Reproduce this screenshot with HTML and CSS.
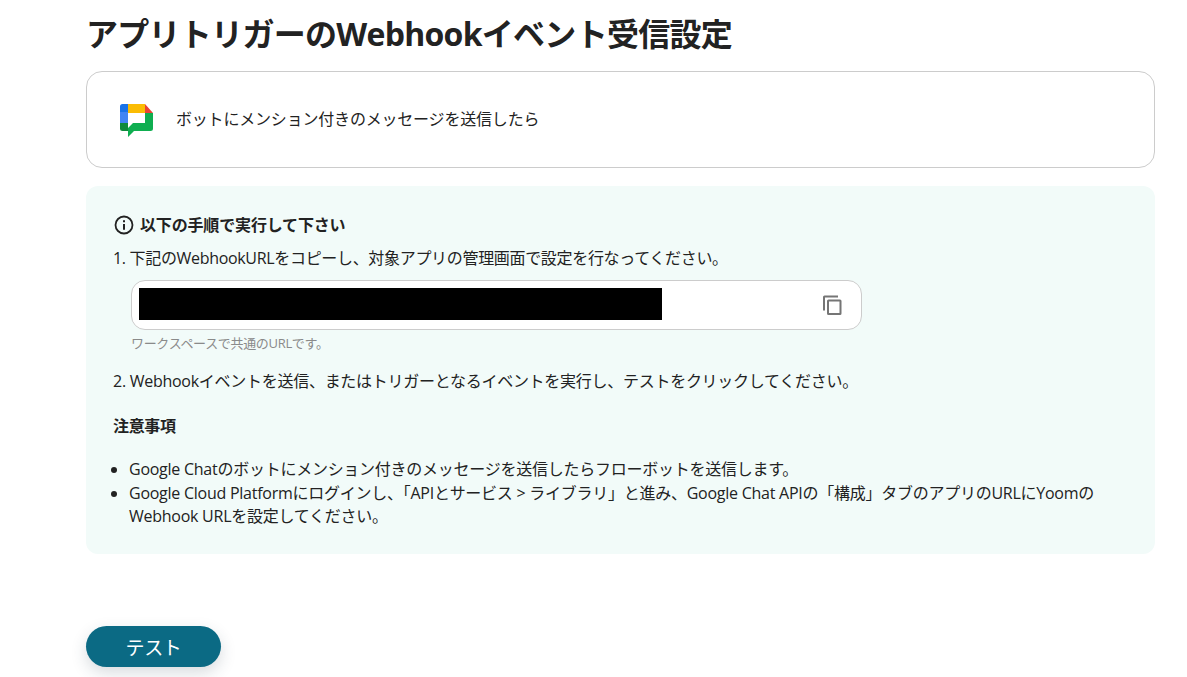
FILE: index.html
```html
<!DOCTYPE html>
<html lang="ja">
<head>
<meta charset="utf-8">
<title>アプリトリガーのWebhookイベント受信設定</title>
<link rel="stylesheet" href="styles.css">
</head>
<body>
<main class="page">
  <h1 class="title">アプリトリガーのWebhookイベント受信設定</h1>
  <section class="card">
    <svg class="chat-logo" viewBox="0 0 33 33" width="33" height="33" aria-hidden="true">
      <path d="M8 0H2.500A2.500 2.500 0 0 0 0 2.500V8h8z" fill="#1a73e8"/>
      <path d="M0 8h8v11H0z" fill="#4285f4"/>
      <path d="M0 19h8v8H2.500A2.500 2.500 0 0 1 0 24.500z" fill="#0f8a3c"/>
      <path d="M8 0h17v9H8z" fill="#fbbc04"/>
      <path d="M25 0l8 9h-8z" fill="#ea4335"/>
      <path d="M25 9h8v15.500a2.500 2.500 0 0 1-2.500 2.500H14l-6 6v-9l5-5h12z" fill="#0fae50"/>
    </svg>
    <p class="card-text">ボットにメンション付きのメッセージを送信したら</p>
  </section>
  <section class="panel">
    <h2 class="panel-heading">
      <svg class="info-icon" viewBox="0 0 20 20" width="20" height="20" aria-hidden="true">
        <circle cx="10" cy="10" r="8.500" fill="none" stroke="#222" stroke-width="1.800"/>
        <path d="M9 9h2v5.700H9zM9 5.300h2v2H9z" fill="#222"/>
      </svg>
      以下の手順で実行して下さい
    </h2>
    <p class="step">1. 下記のWebhookURLをコピーし、対象アプリの管理画面で設定を行なってください。</p>
    <div class="url-box">
      <div class="redacted"></div>
      <svg class="copy-icon" viewBox="0 0 24 24" width="24" height="24" aria-hidden="true">
        <path d="M18 2.500H4.500A1.500 1.500 0 0 0 3 4v13.500h2V4.500h13zM20 6.500H8.500A1.500 1.500 0 0 0 7 8v12.500A1.500 1.500 0 0 0 8.500 22H20a1.500 1.500 0 0 0 1.500-1.500V8A1.500 1.500 0 0 0 20 6.500zM19.500 20H9V8.500h10.500z" fill="#757575"/>
      </svg>
    </div>
    <p class="hint">ワークスペースで共通のURLです。</p>
    <p class="step step-two">2. Webhookイベントを送信、またはトリガーとなるイベントを実行し、テストをクリックしてください。</p>
    <h3 class="notes-title">注意事項</h3>
    <ul class="notes">
      <li>Google Chatのボットにメンション付きのメッセージを送信したらフローボットを送信します。</li>
      <li>Google Cloud Platformにログインし、「APIとサービス &gt; ライブラリ」と進み、Google Chat APIの「構成」タブのアプリのURLにYoomのWebhook URLを設定してください。</li>
    </ul>
  </section>
  <button class="test-button" type="button">テスト</button>
</main>
</body>
</html>
```

FILE: styles.css
```css
* { box-sizing: border-box; }
html, body { margin: 0; padding: 0; height: 100%; overflow: hidden; }
body {
  background: #fff;
  color: #222;
  font-family: "Open Sans", "Noto Sans CJK JP", sans-serif;
  font-size: 16px;
  letter-spacing: -0.02em;
}
.page {
  width: 1069px;
  margin-left: 86px;
  padding-top: 13px;
  display: flex;
  flex-direction: column;
  align-items: stretch;
}
.title {
  margin: 0;
  font-size: 32px;
  line-height: 42px;
  font-weight: 700;
  letter-spacing: -0.0225em;
  color: #222;
}
.card {
  margin-top: 16px;
  height: 97px;
  border: 1px solid #ccc;
  border-radius: 16px;
  display: flex;
  align-items: center;
  padding-left: 33px;
  gap: 23px;
}
.chat-logo { flex: none; margin-top: 2px; }
.card-text { margin: 0 0 4px; font-size: 16px; letter-spacing: -0.012em; }
.panel {
  margin-top: 18px;
  height: 368px;
  background: #f2fbf9;
  border-radius: 12px;
  padding: 28px 27px 0;
}
.panel-heading {
  margin: 0;
  display: flex;
  align-items: center;
  gap: 6px;
  font-size: 16px;
  line-height: 22px;
  font-weight: 700;
  letter-spacing: -0.01em;
}
.info-icon { flex: none; margin-left: 1px; }
.step { margin: 0; font-size: 16px; line-height: 22px; }
.panel-heading + .step { margin-top: 11px; }
.url-box {
  margin: 11px 0 0 18px;
  width: 731px;
  height: 50px;
  background: #fff;
  border: 1px solid #ccc;
  border-radius: 14px;
  display: flex;
  align-items: center;
  justify-content: space-between;
  padding: 0 17px 2px 7px;
}
.redacted { width: 523px; height: 32px; background: #000; }
.copy-icon { flex: none; margin-top: 2px; }
.hint { margin: 5px 0 0 18px; font-size: 13px; line-height: 17px; color: #8a8a8a; }
.step-two { margin-top: 18px; letter-spacing: -0.017em; }
.notes-title { margin: 23px 0 0; font-size: 16px; line-height: 22px; font-weight: 700; }
.notes { margin: 21px 0 0; padding: 0 0 0 16px; font-size: 16px; line-height: 23.5px; letter-spacing: -0.016em; }
.test-button {
  margin-top: 72px;
  align-self: flex-start;
  width: 135px;
  height: 41px;
  border: 0;
  border-radius: 21px;
  background: #0b6a84;
  color: #fff;
  font-family: inherit;
  font-size: 19px;
  letter-spacing: -0.02em;
  box-shadow: 0 6px 16px rgba(40, 60, 80, 0.18);
}
```
